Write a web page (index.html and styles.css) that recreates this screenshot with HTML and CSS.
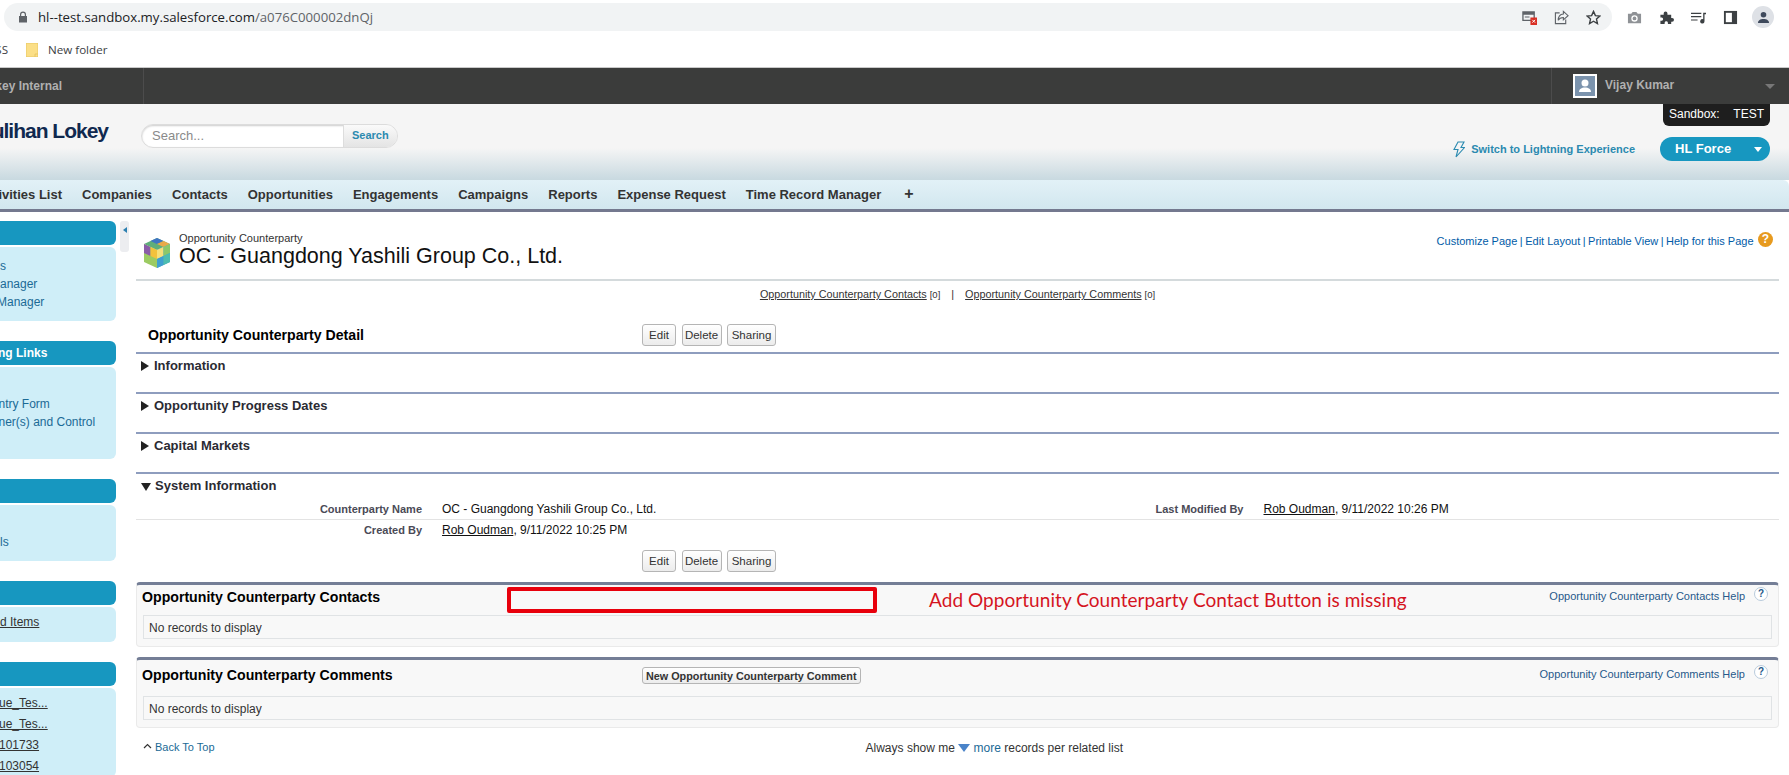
FILE: index.html
```html
<!DOCTYPE html>
<html lang="en">

<head>
  <meta charset="UTF-8">
  <title>OC - Guangdong Yashili Group Co., Ltd.</title>
  <link rel="stylesheet" href="styles.css">
</head>

<body>
  <!-- browser chrome -->
  <div class="browser-bar">
    <div class="address">
      <svg class="lock" viewBox="0 0 10 12"><path d="M2 5V3.500a3 3 0 0 1 6 0V5h1v6.500H1V5zM3.200 5h3.600V3.500a1.800 1.800 0 0 0-3.600 0z" fill="#5f6368"/></svg>
      <span class="url">hl--test.sandbox.my.salesforce.com<span class="url-path">/a076C000002dnQj</span></span>
      <div class="address-icons">
        <svg class="ic" viewBox="0 0 16 16"><path d="M1 2h12v9H1z" fill="none" stroke="#5f6368" stroke-width="1.400"/><path d="M1 2h12v3H1zM3 7h5v1H3z" fill="#5f6368"/><path d="M9 8h7v8H9z" fill="#d93025"/><path d="M11 10.500l3 3m0-3l-3 3" stroke="#fff"/></svg>
        <svg class="ic" viewBox="0 0 16 16"><path d="M6 3H1.500v11.500h11V10" fill="none" stroke="#5f6368" stroke-width="1.200"/><path d="M10 1.500l5 4.500-5 4.500V8C7 8 5.500 9 4.500 11 4.500 7.500 6.500 4.500 10 4.200z" fill="none" stroke="#5f6368" stroke-width="1.200"/></svg>
        <svg class="ic" viewBox="0 0 16 16"><path d="M8 1.500l2 4.500 4.800.5-3.600 3.200 1 4.800L8 12l-4.200 2.500 1-4.800L1.200 6.500 6 6z" fill="none" stroke="#3c4043" stroke-width="1.500"/></svg>
      </div>
    </div>
    <div class="browser-icons">
      <svg class="ic" viewBox="0 0 16 16"><path d="M1 4h3.500L6 2h4l1.500 2H15v10H1z" fill="#8f9296"/><circle cx="8" cy="9" r="3.400" fill="#fff"/><circle cx="8" cy="9" r="2" fill="#8f9296"/></svg>
      <svg class="ic" viewBox="0 0 16 16"><path d="M1.500 5H5V3.500a2 2 0 0 1 4 0V5h4v3.500h1a2 2 0 0 1 0 4h-1V15H9.500v-1.500a1.800 1.800 0 0 0-3.500 0V15H1.500v-3.500H3a1.800 1.800 0 0 0 0-3.500H1.500z" fill="#3c4043"/></svg>
      <svg class="ic" viewBox="0 0 16 16"><path d="M0 3h11v1.300H0zM0 6.500h11v1.300H0zM0 10h7v1.300H0z" fill="#3c4043"/><path d="M13 3h3v1.500h-1.600V12a2.300 2.300 0 1 1-1.400-2.100z" fill="#3c4043"/></svg>
      <svg class="ic" viewBox="0 0 16 16"><path d="M1 1h14v14H1z" fill="#3c4043"/><path d="M3 3h6.500v10H3z" fill="#fff"/></svg>
      <div class="profile">
        <svg viewBox="0 0 14 14"><circle cx="7" cy="4" r="3" fill="#3f4a5c"/><path d="M1 13c0-3 2.500-4.500 6-4.500s6 1.500 6 4.500z" fill="#3f4a5c"/></svg>
      </div>
    </div>
  </div>
  <div class="bookmarks">
    <span class="bm-clip">SS</span>
    <svg class="folder" viewBox="0 0 12 14"><path d="M0 0h12v14H0z" fill="#fbdf87"/><path d="M0 0h12v14H0z" fill="none" stroke="#e8c765"/><path d="M9 14v-3h3" fill="none" stroke="#e8c765"/></svg>
    <span class="bm-label">New folder</span>
  </div>

  <!-- salesforce header -->
  <div class="topbar">
    <div class="app-name"><span>Houlihan Lokey Internal</span></div>
    <div class="user-menu">
      <div class="avatar">
        <svg viewBox="0 0 20 20"><circle cx="10" cy="7" r="3.500" fill="#fff"/><path d="M4 16c0-3 2.500-4.500 6-4.500s6 1.500 6 4.500z" fill="#fff"/></svg>
      </div>
      <span class="user-name">Vijay Kumar</span>
      <span class="user-caret"></span>
    </div>
    <div class="sandbox-tag"><span>Sandbox:</span><span>TEST</span></div>
  </div>

  <div class="header">
    <div class="logo"><span>Houlihan Lokey</span></div>
    <div class="search">
      <div class="search-input">Search...</div>
      <div class="search-btn">Search</div>
    </div>
    <div class="header-right">
      <svg class="bolt" viewBox="0 0 12 17"><path d="M5 1h6L8 6.500h3.500L3 16l2-7.500H1z" fill="none" stroke="#2b8ab0" stroke-width="1.100"/></svg>
      <a class="switch-link">Switch to Lightning Experience</a>
      <div class="app-pill"><span>HL Force</span><span class="pill-caret"></span></div>
    </div>
  </div>

  <div class="tabs">
    <div class="tab-first"><span>Activities List</span></div>
    <a>Companies</a>
    <a>Contacts</a>
    <a>Opportunities</a>
    <a>Engagements</a>
    <a>Campaigns</a>
    <a>Reports</a>
    <a>Expense Request</a>
    <a>Time Record Manager</a>
    <a class="tab-plus">+</a>
  </div>

  <div class="body-wrap">
    <div class="sidebar">
      <div class="side-head"></div>
      <div class="side-body sb-one">
        <a>s</a>
        <a>anager</a>
        <a class="cut-m">Manager</a>
      </div>
      <div class="side-head side-head-cut">ng Links</div>
      <div class="side-body sb-two">
        <a>ntry Form</a>
        <a>ner(s) and Control</a>
      </div>
      <div class="side-head"></div>
      <div class="side-body sb-three">
        <a>ls</a>
      </div>
      <div class="side-head"></div>
      <div class="side-body sb-four">
        <a class="ul">d Items</a>
      </div>
      <div class="side-head"></div>
      <div class="side-body sb-five">
        <a class="ul">ue_Tes...</a>
        <a class="ul">ue_Tes...</a>
        <a class="ul">101733</a>
        <a class="ul">103054</a>
      </div>
    </div>
    <div class="collapse-handle"><span></span></div>

    <div class="main">
      <div class="page-title">
        <svg class="cube" viewBox="0 0 28 32">
          <path d="M14 1l13 6-13 6L1 7z" fill="#5fae7a"/>
          <path d="M14 1l6.500 3-6.500 3-6.500-3z" fill="#3f74c4"/>
          <path d="M20.500 4L27 7l-6.500 3L14 7z" fill="#e9a94a"/>
          <path d="M1 7l13 6v18L1 25z" fill="#9ccb62"/>
          <path d="M14 13l13-6v18l-13 6z" fill="#4aa3c8"/>
          <path d="M1 7l6.500 3v9L1 16z" fill="#8a5ca8"/>
          <path d="M7.500 10l6.500 3v9l-6.500-3z" fill="#f2c23c"/>
          <path d="M14 13l6.500-3v9L14 22z" fill="#f6e07a"/>
          <path d="M20.500 10L27 7v9l-6.500 3z" fill="#8cc86a"/>
          <path d="M14 22l6.500-3v9L14 31z" fill="#3f9fd0"/>
          <path d="M20.500 19l6.500-3v9l-6.500 3z" fill="#4dbdb0"/>
        </svg>
        <div class="title-text">
          <div class="title-type">Opportunity Counterparty</div>
          <h1>OC - Guangdong Yashili Group Co., Ltd.</h1>
        </div>
        <div class="help-links">
          <a>Customize Page</a> | <a>Edit Layout</a> | <a>Printable View</a> | <a>Help for this Page</a>
          <span class="help-orange">?</span>
        </div>
      </div>

      <div class="related-links">
        <a>Opportunity Counterparty Contacts</a> <small>[0]</small>
        <span class="pipe">|</span>
        <a>Opportunity Counterparty Comments</a> <small>[0]</small>
      </div>

      <div class="detail-head">
        <h2>Opportunity Counterparty Detail</h2>
        <div class="btn-row">
          <button>Edit</button>
          <button>Delete</button>
          <button>Sharing</button>
        </div>
      </div>

      <div class="section"><span class="tri-right"></span><h3>Information</h3></div>
      <div class="section"><span class="tri-right"></span><h3>Opportunity Progress Dates</h3></div>
      <div class="section"><span class="tri-right"></span><h3>Capital Markets</h3></div>
      <div class="section section-open"><span class="tri-down"></span><h3>System Information</h3></div>

      <div class="field-row field-row-line">
        <label>Counterparty Name</label>
        <div class="val">OC - Guangdong Yashili Group Co., Ltd.</div>
        <label class="label-two">Last Modified By</label>
        <div class="val"><a>Rob Oudman</a>, 9/11/2022 10:26 PM</div>
      </div>
      <div class="field-row">
        <label>Created By</label>
        <div class="val"><a>Rob Oudman</a>, 9/11/2022 10:25 PM</div>
      </div>

      <div class="btn-row btn-row-bottom">
        <button>Edit</button>
        <button>Delete</button>
        <button>Sharing</button>
      </div>

      <div class="panel panel-contacts">
        <div class="panel-head">
          <h2>Opportunity Counterparty Contacts</h2>
          <a class="panel-help">Opportunity Counterparty Contacts Help</a>
          <span class="help-blue">?</span>
        </div>
        <div class="no-records">No records to display</div>
        <div class="red-box"></div>
        <div class="red-note">Add Opportunity Counterparty Contact Button is missing</div>
      </div>

      <div class="panel panel-comments">
        <div class="panel-head">
          <h2>Opportunity Counterparty Comments</h2>
          <button class="btn-new">New Opportunity Counterparty Comment</button>
          <a class="panel-help">Opportunity Counterparty Comments Help</a>
          <span class="help-blue">?</span>
        </div>
        <div class="no-records">No records to display</div>
      </div>

      <div class="page-foot">
        <a class="back-top"><svg viewBox="0 0 9 6"><path d="M1 5l3.500-3.500L8 5" fill="none" stroke="#333" stroke-width="1.200"/></svg>Back To Top</a>
        <div class="show-more">Always show me <span class="tri-more"></span> <a>more</a> records per related list</div>
      </div>
    </div>
  </div>
</body>

</html>
```

FILE: styles.css
```css
* {
  box-sizing: border-box;
}

html, body {
  height: 775px;
  overflow: hidden;
}

body {
  margin: 0;
  background-color: #fff;
  font-family: "Liberation Sans", Arial, sans-serif;
  font-size: 12px;
  color: #222;
}

a {
  color: inherit;
}

/* browser chrome */
.browser-bar {
  display: flex;
  align-items: center;
  height: 34px;
  padding-left: 4px;
}

.address {
  display: flex;
  align-items: center;
  width: 1608px;
  height: 28px;
  padding: 0 11px 0 14px;
  background-color: #f1f3f4;
  border-radius: 14px;
}

.lock {
  width: 10px;
  height: 12px;
  margin-right: 10px;
}

.url {
  font-family: "Open Sans", sans-serif;
  font-size: 13.2px;
  color: #202124;
  white-space: nowrap;
}

.url-path {
  color: #5f6368;
}

.address-icons {
  display: flex;
  gap: 17px;
  margin-left: auto;
}

.ic {
  display: block;
  width: 15px;
  height: 15px;
}

.browser-icons {
  display: flex;
  align-items: center;
  gap: 17px;
  margin-left: 15px;
}

.profile {
  display: flex;
  align-items: center;
  justify-content: center;
  width: 22px;
  height: 22px;
  margin-left: -3px;
  background-color: #dee1e6;
  border-radius: 50%;
}

.profile svg {
  width: 13px;
  height: 13px;
}

.bookmarks {
  display: flex;
  align-items: center;
  height: 34px;
  padding-bottom: 2px;
  border-bottom: 1px solid #c9c9c9;
  font-family: "Open Sans", sans-serif;
  font-size: 11.6px;
  color: #3c4043;
}

.bm-clip {
  display: flex;
  justify-content: flex-end;
  width: 8px;
}

.folder {
  width: 12px;
  height: 14px;
  margin-left: 18px;
}

.bm-label {
  margin-left: 10px;
}

/* dark bar */
.topbar {
  position: relative;
  display: flex;
  justify-content: space-between;
  height: 36px;
  background-color: #3b3c3b;
  font-weight: bold;
  color: #b0b0b0;
}

.app-name {
  display: flex;
  align-items: center;
  justify-content: flex-end;
  width: 144px;
  padding-right: 81px;
  border-right: 1px solid #4c4c4c;
  white-space: nowrap;
}

.user-menu {
  display: flex;
  align-items: center;
  width: 238px;
  padding-left: 21px;
  border-left: 1px solid #4c4c4c;
}

.avatar {
  width: 24px;
  height: 24px;
  background-color: #7b93ad;
  border: 2px solid #fff;
}

.avatar svg {
  display: block;
}

.user-name {
  margin: 0 0 2px 8px;
}

.user-caret {
  margin-left: auto;
  margin-right: 14px;
  border-top: 5px solid #777;
  border-left: 5px solid transparent;
  border-right: 5px solid transparent;
}

.sandbox-tag {
  position: absolute;
  top: 36px;
  right: 19px;
  z-index: 2;
  display: flex;
  justify-content: space-between;
  width: 107px;
  height: 22px;
  padding: 3px 6px;
  background-color: #1e1e1e;
  border-radius: 0 0 6px 6px;
  font-weight: normal;
  color: #fff;
}

/* logo row */
.header {
  display: flex;
  height: 76px;
  background: linear-gradient(#f5f5f5 58%, #c8d9e0);
}

.logo {
  display: flex;
  justify-content: flex-end;
  width: 141px;
  padding: 15px 33px 0 0;
  font-size: 21px;
  font-weight: bold;
  letter-spacing: -1px;
  color: #10294f;
  white-space: nowrap;
}

.search {
  display: flex;
  width: 257px;
  height: 24px;
  margin-top: 20px;
  border: 1px solid #dcdcdc;
  border-radius: 12px;
  background-color: #fff;
  overflow: hidden;
  box-shadow: inset 0 1px 2px #ccc;
}

.search-input {
  flex: 1;
  padding: 3px 0 0 10px;
  font-size: 13px;
  color: #8a8a8a;
}

.search-btn {
  width: 54px;
  padding: 4px 0 0 8px;
  background: linear-gradient(#fafafa, #e4e4e4);
  border-left: 1px solid #ddd;
  font-size: 11px;
  font-weight: bold;
  color: #2b8ab0;
}

.header-right {
  display: flex;
  align-items: center;
  height: 24px;
  margin: 33px 19px 0 auto;
}

.bolt {
  width: 12px;
  height: 17px;
}

.switch-link {
  margin-left: 6px;
  font-size: 11px;
  font-weight: bold;
  color: #2b8ab0;
}

.app-pill {
  display: flex;
  align-items: center;
  justify-content: space-between;
  width: 110px;
  height: 24px;
  margin-left: 25px;
  padding: 0 8px 2px 15px;
  background-color: #1797c0;
  border-radius: 12px;
  font-size: 13px;
  font-weight: bold;
  color: #fff;
}

.pill-caret {
  margin-top: 2px;
  border-top: 5px solid #fff;
  border-left: 4px solid transparent;
  border-right: 4px solid transparent;
}

/* tabs */
.tabs {
  display: flex;
  align-items: center;
  gap: 20px;
  height: 32px;
  padding-bottom: 1px;
  background: linear-gradient(#e2f1f7, #d2e7ef);
  border-bottom: 3px solid #74798f;
  border-radius: 0 6px 0 0;
  font-size: 13px;
  font-weight: bold;
  color: #333;
  white-space: nowrap;
}

.tab-first {
  display: flex;
  justify-content: flex-end;
  width: 62px;
}

.tab-plus {
  margin-left: 3px;
  font-size: 16px;
}

/* sidebar */
.body-wrap {
  display: flex;
  height: 563px;
  overflow: hidden;
}

.sidebar {
  width: 116px;
  padding-top: 9px;
}

.side-head {
  height: 24px;
  margin-bottom: 2px;
  padding-top: 5px;
  background-color: #1797c0;
  border-radius: 0 6px 6px 0;
  font-weight: bold;
  color: #fff;
}

.side-head-cut {
  text-indent: -2px;
}

.side-body {
  margin-bottom: 20px;
  background-color: #cfeef8;
  border-radius: 0 6px 6px 0;
  color: #1b6a96;
  white-space: nowrap;
}

.side-body a {
  display: block;
  line-height: 18px;
}

.side-body .ul {
  text-decoration: underline;
  color: #333;
}

.side-body .cut-m {
  text-indent: -3px;
}

.sb-one { padding: 10px 0; }
.sb-two { padding: 28px 0; text-indent: -1.5px; }
.sb-three { padding: 28px 0 10px; }
.sb-four { padding: 6px 0 11px; }
.sb-five { padding: 5px 0 0; margin-bottom: 0; text-indent: -1px; }

.sb-five a {
  line-height: 21px;
}

.collapse-handle {
  display: flex;
  align-items: center;
  justify-content: center;
  width: 9px;
  height: 31px;
  margin: 9px 0 0 4px;
  padding-bottom: 14px;
  background-color: #ecedf0;
  border-radius: 3px;
}

.collapse-handle span {
  border-right: 4px solid #2b7fb0;
  border-top: 3px solid transparent;
  border-bottom: 3px solid transparent;
}

/* main column */
.main {
  width: 1643px;
  margin-left: 7px;
}

.page-title {
  display: flex;
  height: 69px;
  padding: 25px 6px 0 7px;
  border-bottom: 2px solid #d4dadc;
}

.cube {
  width: 28px;
  height: 32px;
}

.title-text {
  margin: -5px 0 0 8px;
}

.title-type {
  font-size: 11px;
  line-height: 12px;
  color: #333;
}

h1 {
  margin: 0;
  font-size: 21.5px;
  font-weight: normal;
  line-height: 24px;
  color: #111;
}

.help-links {
  display: flex;
  gap: 2.5px;
  height: 16px;
  margin: -5px 0 0 auto;
  font-size: 11px;
  line-height: 18px;
  color: #015ba7;
}

.help-orange {
  display: block;
  width: 15px;
  height: 15px;
  margin-left: 2px;
  background-color: #e79a1f;
  border-radius: 50%;
  font-size: 12px;
  font-weight: bold;
  line-height: 15px;
  text-align: center;
  color: #fff;
}

.related-links {
  height: 28px;
  padding-top: 7px;
  font-size: 10.8px;
  text-align: center;
  color: #333;
}

.related-links a {
  text-decoration: underline;
}

.related-links small {
  font-size: 9.5px;
}

.pipe {
  margin: 0 8px;
}

.detail-head {
  display: flex;
  align-items: center;
  height: 43px;
  padding: 15px 0 6px 12px;
}

h2 {
  width: 494px;
  margin: 0;
  font-size: 14.15px;
  font-weight: bold;
  color: #000;
}

.btn-row {
  display: flex;
  gap: 5.5px;
}

button {
  height: 22px;
  padding: 0;
  background: linear-gradient(#fff, #ececec);
  border: 1px solid #b5b5b5;
  border-radius: 3px;
  font-family: "Liberation Sans", Arial, sans-serif;
  font-size: 11.5px;
  color: #333;
}

.btn-row button:nth-child(1) {
  width: 34px;
}

.btn-row button:nth-child(2) {
  width: 40px;
}

.btn-row button:nth-child(3) {
  width: 49px;
}

.section {
  display: flex;
  align-items: flex-start;
  height: 40px;
  padding: 3px 0 0 5px;
  border-top: 2px solid #8e9dbe;
}

.section-open {
  height: 27px;
}

h3 {
  margin: 0 0 0 5px;
  font-size: 13px;
  font-weight: bold;
  line-height: 18px;
  color: #2b2b33;
}

.section-open h3 {
  margin-left: 4px;
}

.tri-right {
  margin-top: 4px;
  border-left: 8px solid #222;
  border-top: 5px solid transparent;
  border-bottom: 5px solid transparent;
}

.tri-down {
  margin-top: 6px;
  border-top: 8px solid #222;
  border-left: 5px solid transparent;
  border-right: 5px solid transparent;
}

.field-row {
  display: flex;
  align-items: center;
  height: 19px;
}

.field-row-line {
  height: 21px;
  border-bottom: 1px solid #e3e3e3;
}

.field-row label {
  width: 286px;
  font-size: 11px;
  font-weight: bold;
  text-align: right;
  color: #4a4a56;
}

.field-row .val {
  width: 535px;
  margin-left: 20px;
  color: #111;
}

.val a {
  text-decoration: underline;
}

.field-row .label-two {
  width: 266.500px;
}

.field-row-line .label-two + .val {
  width: auto;
}

.btn-row-bottom {
  height: 22px;
  margin-top: 11px;
  padding-left: 506px;
}

/* related lists */
.panel {
  position: relative;
  background-color: #f8f8f8;
  border: 1px solid #eaeaea;
  border-top: 3px solid #747e96;
  border-radius: 4px;
}

.panel-contacts {
  height: 65px;
  margin-top: 10px;
}

.panel-comments {
  height: 71px;
  margin-top: 10px;
}

.panel-head {
  display: flex;
  align-items: flex-start;
  padding: 0 5px;
}

.panel-contacts .panel-head {
  height: 30px;
  padding-top: 4px;
}

.panel-comments .panel-head {
  height: 36px;
  padding-top: 7px;
}

.panel-head h2 {
  width: 500px;
}

.btn-new {
  height: 17px;
  padding: 0 3px;
  font-size: 10.8px;
  font-weight: bold;
}

.panel-help {
  margin: -1px 0 0 auto;
  font-size: 11px;
  line-height: 16px;
  color: #27598a;
}

.help-blue {
  width: 14px;
  height: 14px;
  margin: -2px 5px 0 9px;
  background-color: #fff;
  border: 1px solid #b9cbdc;
  border-radius: 50%;
  font-size: 10px;
  font-weight: bold;
  line-height: 12px;
  text-align: center;
  color: #27598a;
}

.no-records {
  height: 24px;
  margin: 0 6px;
  padding: 5px;
  border: 1px solid #e0e3e5;
  color: #333;
}

.red-box {
  position: absolute;
  top: 2px;
  left: 370px;
  width: 370px;
  height: 26px;
  border: 4px solid #e8000c;
  border-radius: 2px;
}

.red-note {
  position: absolute;
  top: 3px;
  left: 792px;
  font-family: Lato, sans-serif;
  font-size: 19px;
  letter-spacing: 0.05px;
  line-height: 24px;
  color: #d5141f;
  white-space: nowrap;
}

.page-foot {
  display: flex;
  height: 40px;
  padding: 13px 0 0 7px;
  font-size: 11px;
}

.back-top {
  color: #1b6a96;
}

.back-top svg {
  width: 9px;
  height: 6px;
  margin-right: 3px;
  vertical-align: 2px;
}

.show-more {
  margin-left: 651px;
  font-size: 12px;
  color: #333;
}

.show-more a {
  color: #1b6a96;
}

.tri-more {
  display: inline-block;
  border-top: 8px solid #4a84c9;
  border-left: 6px solid transparent;
  border-right: 6px solid transparent;
}
```
